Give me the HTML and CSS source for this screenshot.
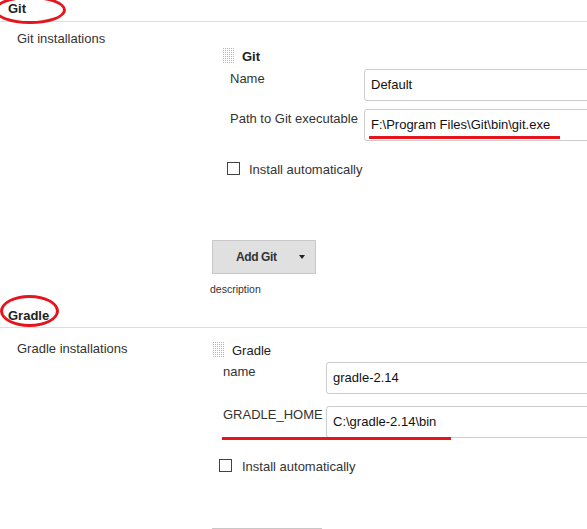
FILE: index.html
```html
<!DOCTYPE html>
<html>
<head>
<meta charset="utf-8">
<link rel="stylesheet" href="styles.css">
</head>
<body>
<div class="page">
  <section class="sec sec-git">
    <div class="sec-head"><span class="sec-title">Git</span><span class="ring ring-git"></span></div>
    <div class="row row-git">
      <div class="row-label">Git installations</div>
      <div class="row-body">
        <div class="inst inst-git">
          <div class="inst-head"><span class="grip"></span><span class="inst-title bold">Git</span></div>
          <div class="field">
            <div class="field-label">Name</div>
            <div class="input">Default</div>
          </div>
          <div class="field field-2">
            <div class="field-label">Path to Git executable</div>
            <div class="input">F:\Program Files\Git\bin\git.exe<span class="mark mark-git"></span></div>
          </div>
          <div class="check"><span class="box"></span><span>Install automatically</span></div>
        </div>
        <div class="btn btn-git"><span class="btn-text">Add Git</span><span class="caret"></span></div>
        <div class="desc">description</div>
      </div>
    </div>
  </section>

  <section class="sec sec-gradle">
    <div class="sec-head"><span class="sec-title">Gradle</span><span class="ring ring-gradle"></span></div>
    <div class="row row-gradle">
      <div class="row-label">Gradle installations</div>
      <div class="row-body">
        <div class="inst inst-gradle">
          <div class="inst-head"><span class="grip"></span><span class="inst-title">Gradle</span></div>
          <div class="field">
            <div class="field-label">name</div>
            <div class="input">gradle-2.14</div>
          </div>
          <div class="field field-2">
            <div class="field-label">GRADLE_HOME</div>
            <div class="input">C:\gradle-2.14\bin</div>
            <span class="mark mark-gradle"></span>
          </div>
          <div class="check"><span class="box"></span><span>Install automatically</span></div>
        </div>
        <div class="btn btn-gradle"></div>
      </div>
    </div>
  </section>
</div>
</body>
</html>
```

FILE: styles.css
```css
html, body {
  margin: 0;
  padding: 0;
  background: #fff;
  overflow: hidden;
}

.page {
  width: 587px;
  height: 529px;
  overflow: hidden;
  font-family: "Liberation Sans", Arial, sans-serif;
  font-size: 13px;
  line-height: 15px;
  color: #333;
}

.sec-head {
  position: relative;
  padding: 1px 0 5px 8px;
  border-bottom: 1px solid #ddd;
  font-weight: bold;
  color: #222;
}

.sec-gradle .sec-head {
  margin-top: 13px;
  padding-top: 0;
  padding-bottom: 4px;
}

.ring {
  position: absolute;
  box-sizing: border-box;
  border: 3px solid #e5141d;
  border-radius: 50%;
}

.ring-git {
  left: -6px;
  top: -4px;
  width: 72px;
  height: 28px;
}

.ring-gradle {
  left: 0;
  top: -13px;
  width: 59px;
  height: 32px;
}

.row {
  display: flex;
}

.row-label {
  width: 193px;
  padding-left: 17px;
  flex: 0 0 auto;
}

.row-git .row-label { padding-top: 9px; }
.row-gradle .row-label { padding-top: 13px; }

.row-body {
  flex: 1 1 auto;
  min-width: 0;
}

.row-git .row-body { padding-top: 26px; }
.row-gradle .row-body { padding-top: 14px; }

.inst-git { padding-left: 13px; }
.inst-gradle { padding-left: 3px; }

.inst-head {
  display: flex;
  align-items: center;
  gap: 8px;
  height: 16px;
}

.grip {
  flex: 0 0 11px;
  width: 11px;
  height: 16px;
  background-image: radial-gradient(circle at 0.5px 0.5px, #b4b4b4 0.7px, transparent 0.8px);
  background-size: 2px 2px;
}

.inst-title { color: #222; }
.bold { font-weight: bold; }

.field {
  position: relative;
  display: flex;
  margin-top: 5px;
}

.inst-git .field { padding-left: 7px; }
.inst-gradle .field { padding-left: 10px; margin-top: 4px; }

.inst-git .field-2 { margin-top: 8px; }
.inst-gradle .field-2 { margin-top: 12px; }

.field-label {
  flex: 0 0 auto;
  padding-top: 2px;
}

.inst-gradle .field-2 .field-label { padding-top: 1px; }

.inst-git .field-label { width: 134px; }
.inst-gradle .field-label { width: 103px; }

.input {
  position: relative;
  flex: 0 0 auto;
  width: 320px;
  height: 32px;
  box-sizing: border-box;
  border: 1px solid #ccc;
  border-radius: 3px;
  padding-left: 6px;
  line-height: 30px;
  color: #111;
  white-space: nowrap;
}

.mark {
  position: absolute;
  height: 3px;
  background: #e5141d;
}

.mark-git {
  left: 4px;
  top: 26px;
  width: 191px;
}

.mark-gradle {
  left: 9px;
  top: 31px;
  width: 229px;
}

.check {
  display: flex;
  align-items: flex-start;
  margin-top: 21px;
  color: #333;
}

.inst-git .check { padding-left: 4px; gap: 9px; }
.inst-gradle .check { padding-left: 6px; gap: 10px; }

.box {
  flex: 0 0 13px;
  width: 13px;
  height: 13px;
  box-sizing: border-box;
  border: 1px solid #444;
  background: #fff;
}

.btn {
  display: flex;
  align-items: center;
  box-sizing: border-box;
  height: 34px;
  margin-left: 2px;
  background: #e0e0e0;
  border: 1px solid #c8c8c8;
  font-size: 12px;
  font-weight: bold;
  color: #333;
}

.btn-git {
  width: 104px;
  margin-top: 63px;
  padding-left: 23px;
}

.btn-gradle {
  width: 110px;
  margin-top: 54px;
}

.btn-text { letter-spacing: -0.4px; }

.caret {
  width: 0;
  height: 0;
  margin-left: 22px;
  border-left: 3.5px solid transparent;
  border-right: 3.5px solid transparent;
  border-top: 4px solid #222;
}

.desc {
  margin-top: 9px;
  font-size: 10.5px;
  line-height: 12px;
  color: #333;
}
```
